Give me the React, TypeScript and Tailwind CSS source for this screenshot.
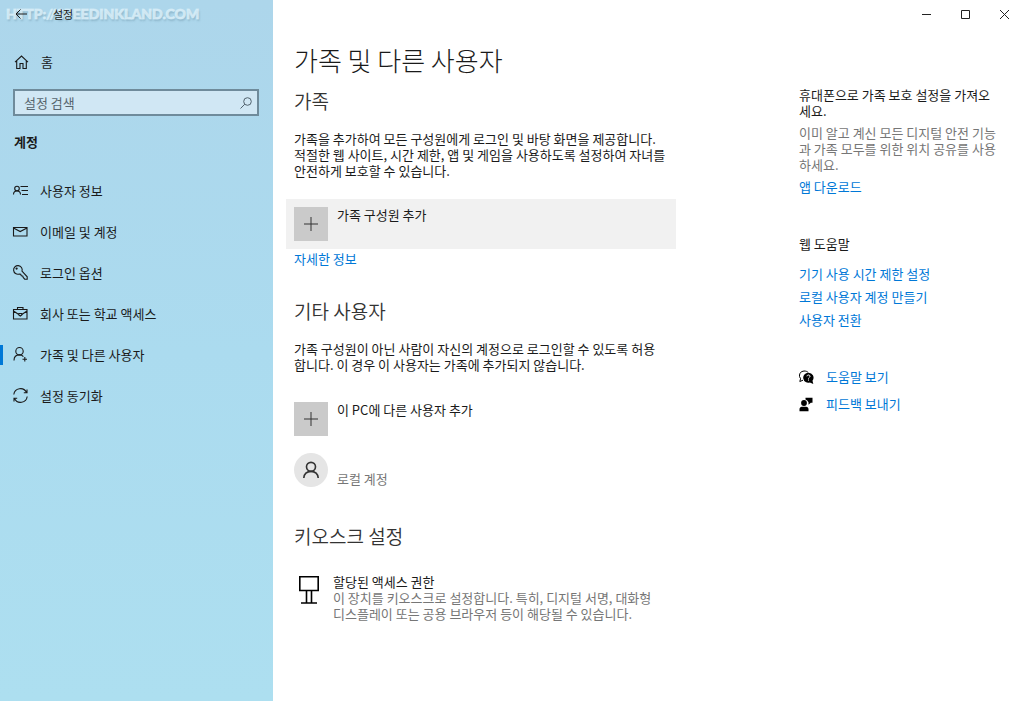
import type { ReactNode } from 'react'

const home = (
  <path d="M1 7.2 7.5 1l6.500 6.200M2.700 5.800V13.500h3.300V8.500h3v5h3.300V5.800" />
)

const navItems: { label: string; icon: ReactNode; active?: boolean }[] = [
  {
    label: '사용자 정보',
    icon: (
      <>
        <circle cx="4" cy="5.500" r="2.300" />
        <path d="M0.500 11.500a3.500 3.500 0 0 1 7 0M7.500 3.500H15M8.500 7.500H15M9 11.500h6" />
      </>
    ),
  },
  {
    label: '이메일 및 계정',
    icon: <path d="M0.500 3.500h13.500v8.500H0.500zM0.500 4l6.700 3.600L14 4" />,
  },
  {
    label: '로그인 옵션',
    icon: (
      <>
        <path d="M9 6.200A4.300 4.300 0 1 0 6.200 9l1.500.3.6 1.400 1.400.3.500 1.400 1.500 1.800h2.500v-2.400z" />
        <circle cx="3.600" cy="3.600" r="0.600" />
      </>
    ),
  },
  {
    label: '회사 또는 학교 액세스',
    icon: (
      <>
        <path d="M0.500 3.500H14v9.500H0.500zM4.500 3.500V1.500h5.500v2M0.500 5l5.300 3.500M14 5 8.800 8.500" />
        <path d="M5.800 7.500h3v1.500l-1.500 1-1.500-1z" />
      </>
    ),
  },
  {
    label: '가족 및 다른 사용자',
    active: true,
    icon: (
      <>
        <circle cx="6.500" cy="4.200" r="3.700" />
        <path d="M1 13.500c0-3.400 2.300-5.600 5.500-5.600 1.700 0 3 .6 3.900 1.700M11.800 10v4.500M9.500 12.300h4.500" />
      </>
    ),
  },
  {
    label: '설정 동기화',
    icon: (
      <path d="M0.800 6.500a6.700 6.700 0 0 1 12.700-2M14 1.500v3.200h-3.200M14.200 8.500a6.700 6.700 0 0 1-12.700 2M1 13.500v-3.200h3.200" />
    ),
  },
]

const helpLinks = ['기기 사용 시간 제한 설정', '로컬 사용자 계정 만들기', '사용자 전환']

function Icon({ children }: { children: ReactNode }) {
  return (
    <svg
      className="h-[15px] w-[15px] shrink-0 overflow-visible"
      viewBox="0 0 15 15"
      fill="none"
      stroke="currentColor"
      strokeWidth={1.1}
      aria-hidden="true"
    >
      {children}
    </svg>
  )
}

function AddButton({ label, highlighted }: { label: string; highlighted?: boolean }) {
  return (
    <button
      type="button"
      className={`flex w-full items-start gap-[9px] p-2 text-left ${highlighted ? 'bg-[#f1f1f1]' : 'bg-transparent'}`}
    >
      <span className="flex h-[34px] w-[34px] shrink-0 items-center justify-center bg-[#cacaca]">
        <svg className="h-[14px] w-[14px]" viewBox="0 0 14 14" fill="none" stroke="#333" aria-hidden="true">
          <path d="M7 0v14M0 7h14" />
        </svg>
      </span>
      <span>{label}</span>
    </button>
  )
}

function Sidebar() {
  return (
    <aside className="relative w-[273px] shrink-0 bg-linear-to-t from-[#addff0] via-[#abdbef] to-[#add6eb]">
      <div className="relative z-10 flex h-7 items-center pl-[15px]">
        <button type="button" aria-label="뒤로">
          <svg className="h-3 w-3" viewBox="0 0 12 12" fill="none" stroke="currentColor" aria-hidden="true">
            <path d="M12 6H1M5.500 1.500 1 6l4.500 4.500" />
          </svg>
        </button>
        <span className="ml-[26px] text-[11px]">설정</span>
      </div>
      <div className="pointer-events-none absolute top-[5px] left-[6px] font-[Lato,sans-serif] text-[14px] leading-[18px] font-black whitespace-nowrap text-[#dcf0f9]/80 [-webkit-text-stroke:1px_rgb(220_240_249/0.6)] [text-shadow:1px_2px_2px_rgb(90_130_150/0.4)]">
        HTTP://SPEEDINKLAND.COM
      </div>

      <a href="#" className="mt-[19px] flex h-[30px] items-center gap-3 pl-[14px]">
        <Icon>{home}</Icon>
        홈
      </a>

      <label className="mr-[14px] ml-[13px] mt-3 flex h-[27px] items-center border-2 border-[#6f8b9b] bg-[#d0e7f4] pr-[5px] pl-[9px]">
        <input
          type="text"
          aria-label="설정 검색"
          placeholder="설정 검색"
          className="min-w-0 flex-1 bg-transparent outline-none placeholder:text-[#57656e]"
        />
        <svg
          className="h-3 w-3 shrink-0"
          viewBox="0 0 12 12"
          fill="none"
          stroke="#52636e"
          aria-hidden="true"
        >
          <circle cx="7.500" cy="4.500" r="3.800" />
          <path d="M4.800 7.200.5 11.500" />
        </svg>
      </label>

      <h2 className="mt-4 pl-[14px] leading-5 font-bold">계정</h2>

      <nav className="mt-[18px]">
        {navItems.map((item) => (
          <a
            key={item.label}
            href="#"
            aria-current={item.active ? 'page' : undefined}
            className="flex h-[41px] items-center"
          >
            <span className={`h-5 w-[3px] ${item.active ? 'bg-[#0078d7]' : 'bg-transparent'}`} />
            <span className="flex items-center gap-3 pl-[10px]">
              <Icon>{item.icon}</Icon>
              {item.label}
            </span>
          </a>
        ))}
      </nav>
    </aside>
  )
}

function WindowControls() {
  const controls = [
    { label: '최소화', d: 'M1 5.500h9' },
    { label: '최대화', d: 'M1.500 1.500h8v8h-8z' },
    { label: '닫기', d: 'M1 1l9 9M10 1l-9 9' },
  ]
  return (
    <div className="flex h-7 justify-end">
      {controls.map((c) => (
        <button key={c.label} type="button" aria-label={c.label} className="flex w-[39px] items-center justify-center">
          <svg className="h-[11px] w-[11px]" viewBox="0 0 11 11" fill="none" stroke="#222" aria-hidden="true">
            <path d={c.d} />
          </svg>
        </button>
      ))}
    </div>
  )
}

function HelpPanel() {
  return (
    <aside className="mr-[23px] ml-auto w-[202px] shrink-0 pt-[59px]">
      <h3>휴대폰으로 가족 보호 설정을 가져오세요.</h3>
      <p className="mt-[6px] text-[#767676]">
        이미 알고 계신 모든 디지털 안전 기능과 가족 모두를 위한 위치 공유를 사용하세요.
      </p>
      <a href="#" className="mt-[6px] block text-[#0078d7]">
        앱 다운로드
      </a>

      <h3 className="mt-[41px]">웹 도움말</h3>
      <ul className="mt-[14px] flex flex-col gap-[7px] text-[#0078d7]">
        {helpLinks.map((link) => (
          <li key={link}>
            <a href="#">{link}</a>
          </li>
        ))}
      </ul>

      <div className="mt-[41px] flex flex-col gap-[11px] text-[#0078d7]">
        <a href="#" className="flex items-center gap-3">
          <svg className="h-[15px] w-[15px]" viewBox="0 0 15 15" aria-hidden="true">
            <path
              d="M4 10.200 0.800 11.500l.8-2.800A4.600 4.600 0 0 1 5 1c2 0 3.300.5 4.200 1.600"
              fill="none"
              stroke="#000"
            />
            <path d="M9.300 2.700a5 5 0 1 0 1.600 9.700L14.300 14l-.8-3.300A5 5 0 0 0 9.300 2.700z" fill="#000" />
            <path d="M7.900 6.300c.2-1.800 3.200-1.700 3.100.1-.1 1-1.500 1.100-1.500 2.200M9.500 9.500v1.100" fill="none" stroke="#fff" />
          </svg>
          도움말 보기
        </a>
        <a href="#" className="flex items-center gap-3">
          <svg className="h-[15px] w-[15px]" viewBox="0 0 15 15" aria-hidden="true">
            <circle cx="5" cy="6" r="2.900" />
            <path d="M0.500 14.300v-2.300c0-1.300 1-2.300 2.300-2.300h4.400c1.300 0 2.300 1 2.300 2.300v2.300zM6.500 0.800H13.500v5H11.800L9.500 7.800v-2.500L8.200 3.500 6.500 2.500z" />
          </svg>
          피드백 보내기
        </a>
      </div>
    </aside>
  )
}

export default function App() {
  return (
    <div className="flex min-h-screen bg-white font-['Noto_Sans_CJK_KR',sans-serif] text-[13px] leading-4 text-[#1a1a1a]">
      <Sidebar />

      <div className="flex min-w-0 flex-1 flex-col">
        <WindowControls />

        <div className="flex flex-1">
          <main className="ml-[13px] max-w-[390px] min-w-0 flex-1">
            <div className="px-2">
              <h1 className="mt-[14px] text-[26px] leading-9 font-light">가족 및 다른 사용자</h1>
              <h2 className="mt-[11px] text-[19px] leading-6 font-[350] text-[#333]">가족</h2>
              <p className="mt-[18px]">
                가족을 추가하여 모든 구성원에게 로그인 및 바탕 화면을 제공합니다.
                <br />
                적절한 웹 사이트, 시간 제한, 앱 및 게임을 사용하도록 설정하여 자녀를
                <br />
                안전하게 보호할 수 있습니다.
              </p>
            </div>

            <div className="mt-5">
              <AddButton label="가족 구성원 추가" highlighted />
            </div>
            <a href="#" className="ml-2 block leading-5 text-[#0078d7]">
              자세한 정보
            </a>

            <div className="mt-[30px] px-2">
              <h2 className="text-[19px] leading-6 font-[350] text-[#333]">기타 사용자</h2>
              <p className="mt-[18px]">
                가족 구성원이 아닌 사람이 자신의 계정으로 로그인할 수 있도록 허용
                <br />
                합니다. 이 경우 이 사용자는 가족에 추가되지 않습니다.
              </p>
            </div>

            <div className="mt-[21px]">
              <AddButton label="이 PC에 다른 사용자 추가" />
            </div>
            <button type="button" className="mt-px flex w-full items-end gap-[9px] p-2 text-left text-[#767676]">
              <span className="flex h-[34px] w-[34px] shrink-0 items-center justify-center rounded-full bg-[#e5e5e5]">
                <svg className="h-[18px] w-[18px]" viewBox="0 0 20 20" fill="none" stroke="#333" strokeWidth={1.8} aria-hidden="true">
                  <circle cx="10" cy="6.500" r="5" />
                  <path d="M2 19c0-4.500 3.500-7.500 8-7.500s8 3 8 7.500" />
                </svg>
              </span>
              <span>로컬 계정</span>
            </button>

            <h2 className="mt-[29px] px-2 text-[19px] leading-6 font-[350] text-[#333]">키오스크 설정</h2>
            <a href="#" className="mt-[26px] flex items-start gap-[14px] pl-[13px]">
              <svg className="mt-[2px] h-7 w-5 shrink-0" viewBox="0 0 20 28" fill="none" stroke="#000" strokeWidth={1.600} aria-hidden="true">
                <path d="M0.800 0.800h18.400v13.700H0.800zM7.500 14.500V27M12.500 14.500V27M2 27h16" />
              </svg>
              <span>
                할당된 액세스 권한
                <span className="block text-[#767676]">
                  이 장치를 키오스크로 설정합니다. 특히, 디지털 서명, 대화형
                  <br />
                  디스플레이 또는 공용 브라우저 등이 해당될 수 있습니다.
                </span>
              </span>
            </a>
          </main>

          <HelpPanel />
        </div>
      </div>
    </div>
  )
}
